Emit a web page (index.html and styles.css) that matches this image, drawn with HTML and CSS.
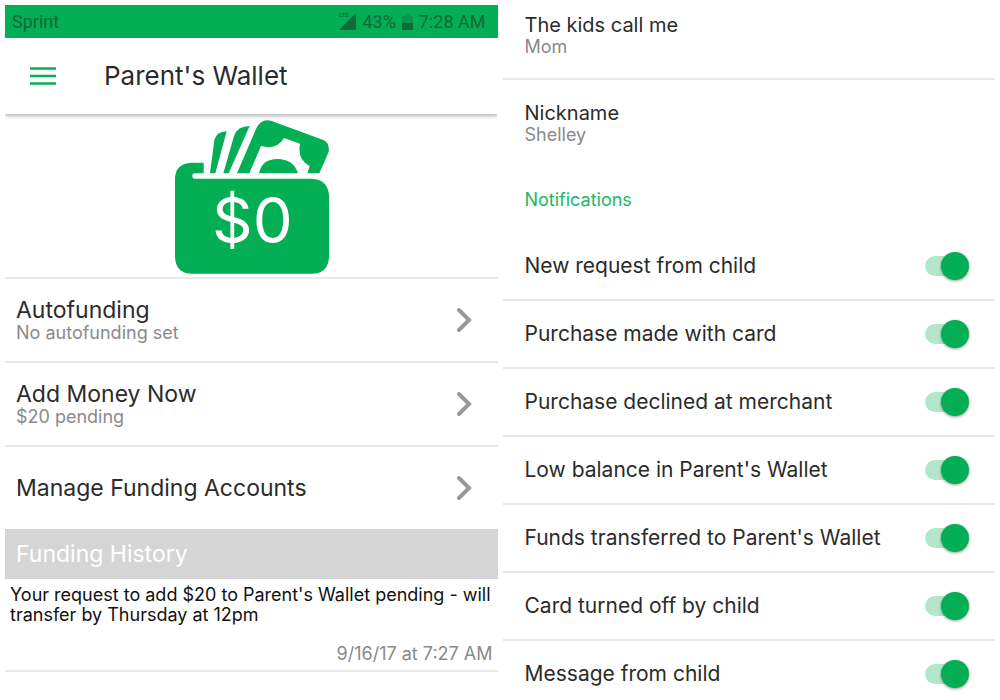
FILE: index.html
```html
<!DOCTYPE html>
<html lang="en">
<head>
  <meta charset="UTF-8" />
  <meta name="viewport" content="width=device-width, initial-scale=1.0"/>
  <title>Parent's Wallet</title>
  <link rel="stylesheet" href="styles.css">
</head>
<body>

  <main class="screens">

    <!-- Wallet -->
    <section class="screen">
      <div class="status-bar">
        <span>Sprint</span>
        <div class="status-right">
          <svg class="signal" viewBox="0 0 17 17" width="17" height="17">
            <path d="M17 0V17H0L11 6V5H12Z" fill="currentColor"/>
            <text x="0" y="4" font-size="6" font-weight="700" fill="currentColor">LTE</text>
          </svg>
          <span>43%</span>
          <svg class="battery" viewBox="0 0 11 16" width="11" height="16">
            <path d="M3 0H8V2H11V9H0V2H3Z" fill="currentColor" opacity="0.35"/>
            <path d="M0 9H11V16H0Z" fill="currentColor"/>
          </svg>
          <span>7:28 AM</span>
        </div>
      </div>

      <header>
        <button class="menu-btn" aria-label="Menu">
          <svg viewBox="0 0 26 18" width="26" height="18">
            <path d="M0 1.5H26M0 9H26M0 16.5H26" stroke="#04ae54" stroke-width="2.6"/>
          </svg>
        </button>
        <h1>Parent's Wallet</h1>
      </header>

      <div class="wallet">
        <svg viewBox="42 30 465 465" width="155" height="155" role="img" aria-label="Wallet balance $0">
          <g fill="#04ae54">
            <path d="M131 158H95Q45 160 45 208V440Q47 491 97 491H455Q505 491 507 440V255Q503 208 455 206H105A8 8 0 0 1 105 190H131Z"/>
            <path d="M150 190L163 90Q170 65 200 64L166 190Z"/>
            <path d="M190 190L222 78Q232 48 269 48L206 190Z"/>
            <path d="M231 190L289 55Q303 25 333 32L490 90Q510 100 506 126L478 190H442L449 168Q411 150 420 101L372 84Q350 121 303 108L268 190Z"/>
            <path d="M297 190Q306 147 352 147Q400 147 414 190Z"/>
          </g>
          <text class="balance" x="277" y="398" text-anchor="middle">$0</text>
        </svg>
      </div>

      <nav class="menu-list">
        <a href="#autofunding" class="menu-item">
          <span class="menu-text">
            <span class="menu-title">Autofunding</span>
            <span class="menu-sub">No autofunding set</span>
          </span>
          <svg class="chevron" viewBox="0 0 16 26" width="16" height="26"><path d="M3 3L13 13L3 23" fill="none" stroke="#999" stroke-width="4" stroke-linecap="round"/></svg>
        </a>
        <a href="#add-money" class="menu-item">
          <span class="menu-text">
            <span class="menu-title">Add Money Now</span>
            <span class="menu-sub">$20 pending</span>
          </span>
          <svg class="chevron" viewBox="0 0 16 26" width="16" height="26"><path d="M3 3L13 13L3 23" fill="none" stroke="#999" stroke-width="4" stroke-linecap="round"/></svg>
        </a>
        <a href="#accounts" class="menu-item">
          <span class="menu-text">
            <span class="menu-title">Manage Funding Accounts</span>
          </span>
          <svg class="chevron" viewBox="0 0 16 26" width="16" height="26"><path d="M3 3L13 13L3 23" fill="none" stroke="#999" stroke-width="4" stroke-linecap="round"/></svg>
        </a>
      </nav>

      <h2 class="history-title">Funding History</h2>
      <div class="history-item">
        <p>Your request to add $20 to Parent's Wallet pending - will transfer by Thursday at 12pm</p>
        <time>9/16/17 at 7:27 AM</time>
      </div>
    </section>

    <!-- Settings -->
    <section class="screen">
      <div class="field first">
        <div class="field-title">The kids call me</div>
        <div class="field-sub">Mom</div>
      </div>
      <div class="field">
        <div class="field-title">Nickname</div>
        <div class="field-sub">Shelley</div>
      </div>

      <h2 class="section-title">Notifications</h2>

      <div class="toggles">
        <label class="toggle"><span>New request from child</span><input type="checkbox" checked></label>
        <label class="toggle"><span>Purchase made with card</span><input type="checkbox" checked></label>
        <label class="toggle"><span>Purchase declined at merchant</span><input type="checkbox" checked></label>
        <label class="toggle"><span>Low balance in Parent's Wallet</span><input type="checkbox" checked></label>
        <label class="toggle"><span>Funds transferred to Parent's Wallet</span><input type="checkbox" checked></label>
        <label class="toggle"><span>Card turned off by child</span><input type="checkbox" checked></label>
        <label class="toggle"><span>Message from child</span><input type="checkbox" checked></label>
      </div>
    </section>

  </main>

</body>
</html>
```
FILE: styles.css
```css
* {
  box-sizing: border-box;
}

body {
  margin: 0;
  padding: 5px;
  font-family: Inter, 'Liberation Sans', sans-serif;
  background-color: #fff;
  color: #2b2b2b;
}

h1, h2, p {
  margin: 0;
  font-weight: 400;
}

.screens {
  display: grid;
  grid-template-columns: 1fr 1fr;
  gap: 5px;
}

/* Status bar */
.status-bar {
  display: flex;
  align-items: center;
  justify-content: space-between;
  height: 33px;
  padding: 0 12px 0 7px;
  background-color: #04ae54;
  color: #12693a;
  font-family: Roboto, sans-serif;
  font-size: 18px;
}

.status-right {
  display: flex;
  align-items: center;
  gap: 6px;
}

.signal {
  overflow: visible;
}

/* Header */
header {
  display: flex;
  align-items: center;
  gap: 48px;
  height: 76px;
  padding-left: 25px;
  box-shadow: 0 2px 4px rgba(0, 0, 0, 0.3);
  clip-path: inset(0 0 -8px 0);
}

.menu-btn {
  display: flex;
  padding: 0;
  border: none;
  background: none;
  cursor: pointer;
}

h1 {
  font-size: 26px;
  line-height: 32px;
}

/* Wallet */
.wallet {
  display: flex;
  justify-content: center;
  padding: 6px 0 2px;
}

.balance {
  font-size: 190px;
  font-weight: 400;
  fill: #fff;
}

.menu-item {
  display: flex;
  align-items: center;
  justify-content: space-between;
  height: 84px;
  padding: 0 26px 0 11px;
  border-top: 2px solid #e8e8e8;
  color: inherit;
  text-decoration: none;
}

.menu-title,
.menu-sub {
  display: block;
}

.menu-title {
  font-size: 23px;
  line-height: 26px;
}

.menu-sub {
  font-size: 18px;
  line-height: 20px;
  color: #8a8a8a;
}

.history-title {
  padding: 9px 11px;
  background-color: #d5d5d5;
  color: #fff;
  font-size: 23px;
  line-height: 32px;
}

.history-item {
  padding: 6px 5px;
  border-bottom: 2px solid #e8e8e8;
  color: #111;
  font-size: 18px;
  line-height: 20px;
}

.history-item time {
  display: block;
  margin-top: 19px;
  text-align: right;
  color: #8a8a8a;
}

/* Settings */
.field {
  padding: 21px 22px;
}

.field.first {
  padding-top: 8px;
  border-bottom: 2px solid #e8e8e8;
}

.field-title {
  font-size: 20px;
  line-height: 24px;
}

.field-sub {
  font-size: 18px;
  line-height: 20px;
  color: #8a8a8a;
}

.section-title {
  padding: 24px 22px 23px;
  color: #1cb863;
  font-size: 18px;
  line-height: 20px;
}

.toggle {
  display: flex;
  align-items: center;
  justify-content: space-between;
  padding: 19px 26px 19px 22px;
  border-bottom: 2px solid #e8e8e8;
  font-size: 21px;
  line-height: 28px;
  cursor: pointer;
}

.toggle:last-child {
  padding-bottom: 0;
  border-bottom: none;
}

.toggle input {
  appearance: none;
  position: relative;
  width: 44px;
  height: 28px;
  margin: 0;
  cursor: pointer;
}

.toggle input::before {
  content: "";
  position: absolute;
  top: 4px;
  left: 0;
  width: 38px;
  height: 20px;
  border-radius: 10px;
  background-color: #b3e7cb;
}

.toggle input::after {
  content: "";
  position: absolute;
  top: 0;
  left: 0;
  width: 28px;
  height: 28px;
  border-radius: 50%;
  background-color: #f5f5f5;
  box-shadow: 0 1px 3px rgba(0, 0, 0, 0.4);
}

.toggle input:checked::after {
  left: 16px;
  background-color: #04ae54;
}
```
